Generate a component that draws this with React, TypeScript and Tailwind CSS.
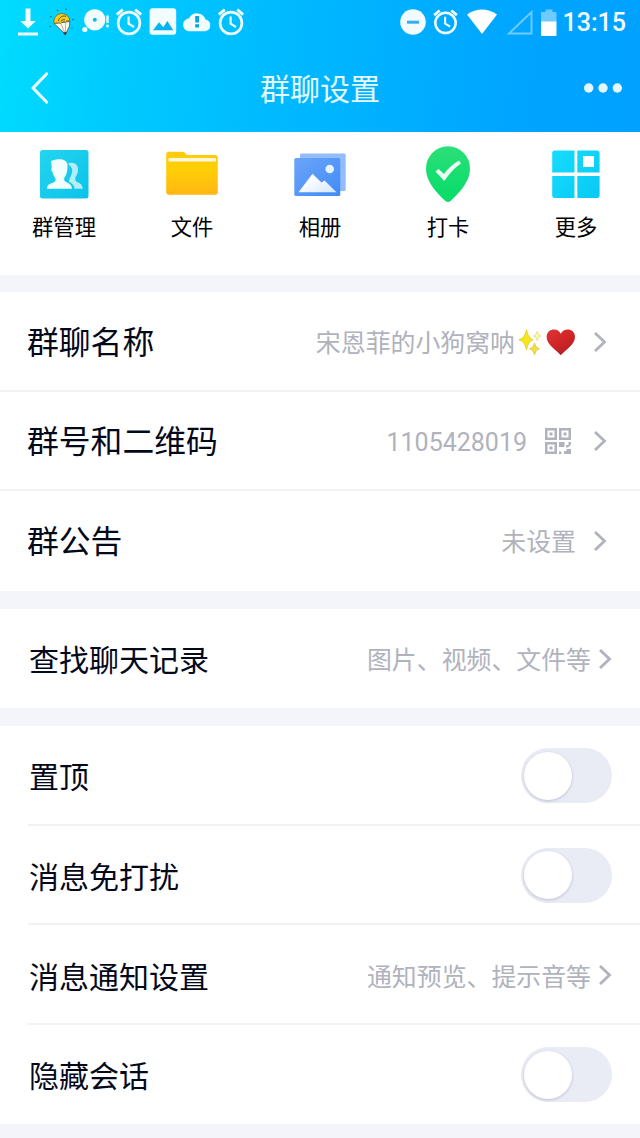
import type { ReactNode } from "react";

function Alarm({ className }: { className: string }) {
  return (
    <svg viewBox="0 0 28 30" className={className} fill="none" stroke="#eefcff">
      <circle cx="14" cy="16" r="10.900" strokeWidth="2.700" />
      <path d="M13.600 9.500v7.200l5.400 3.300" strokeWidth="2.200" />
      <path d="M1.800 7.600 7.800 2.600M26.200 7.600 20.200 2.600" strokeWidth="2.900" />
    </svg>
  );
}

function StatusBar() {
  return (
    <div className="flex h-11 items-center justify-between pl-[14px] pr-[14px]">
      <div className="flex items-center gap-[5.8px]">
        <svg viewBox="0 0 28 30" className="h-[30px] w-7" fill="#f2fdff">
          <path d="M11.500 1.500h5v12.500h5.300L14 21.500 6.200 14h5.300zM4 25.500h20v3H4z" />
        </svg>
        <svg viewBox="0 0 28 30" className="h-[30px] w-7" fill="none">
          <path d="M6 16.500 21.800 14.500 21.500 19 17.500 27.300z" fill="#fff9ea" stroke="#555" strokeWidth=".8" />
          <path d="M6.300 17A8 8 0 1 1 21.900 14.500c-1.800-1.400-3.200-.9-4.500.7-2-.9-3.500-.3-4.500 1.200-2.400-.9-4.700-.9-6.600.6z" fill="#f8cb1f" stroke="#6b5a20" strokeWidth=".7" />
          <path d="M12.900 16.500 17 26.500M17.400 15.500l.2 11" stroke="#8b867a" strokeWidth=".6" />
          <path d="M10.500 14c.5-4 5-6 7.500-4.500M13 14.500c.5-1.500 2.500-2.500 4-1.500" stroke="#544820" strokeWidth=".9" />
          <path d="m14.800 25.500 4-.5-1.500 3.500z" fill="#333" />
          <g fill="#176077"><circle cx="9.500" cy="3.500" r=".8" /><circle cx="18" cy="2.200" r=".8" /><circle cx="3" cy="9.500" r=".8" /><circle cx="25" cy="12.500" r=".8" /><circle cx="2" cy="19.500" r=".8" /><circle cx="24" cy="21" r=".6" /></g>
        </svg>
        <svg viewBox="0 0 28 30" className="h-[30px] w-7" fill="#f2fdff">
          <circle cx="12.800" cy="12.800" r="10.600" />
          <circle cx="12.800" cy="12.800" r="2" fill="#08bce8" />
          <circle cx="2.800" cy="22.500" r="2.600" />
          <path d="M24.300 8.500h2.400v7.500h-2.400zM24.300 17.800h2.400v2.500h-2.400z" />
        </svg>
        <Alarm className="h-[30px] w-7" />
        <svg viewBox="0 0 28 30" className="h-[30px] w-7">
          <rect x=".6" y="1.200" width="26.600" height="26.600" rx="3" fill="#f2fdff" />
          <path d="m4 23.300 6-8 4.300 5 4-6.300 6 9.300z" fill="#05b4ee" />
        </svg>
        <svg viewBox="0 0 28 30" className="h-[30px] w-7">
          <path d="M7 24.300a6.500 6.500 0 0 1-.8-13A8.800 8.800 0 0 1 22.500 12.500a6 6 0 0 1-.5 11.800z" fill="#f2fdff" />
          <path d="M12.200 9h3.800v6.500h-3.800zM12.200 17.300h3.800v3.200h-3.800z" fill="#08a5de" />
        </svg>
        <Alarm className="h-[30px] w-7" />
      </div>
      <div className="flex items-center">
        <svg viewBox="0 0 26 26" className="mr-[6px] size-[26px]">
          <circle cx="13" cy="13" r="12.800" fill="#f2fbff" />
          <path d="M7 13.200h12" stroke="#36aef1" strokeWidth="3" />
        </svg>
        <Alarm className="mr-[7px] h-7 w-[27px]" />
        <svg viewBox="0 0 32 26" className="mr-[8px] h-[26px] w-8">
          <path d="M1 5.500Q16-4.500 31 5.500L16 25z" fill="#fff" />
        </svg>
        <svg viewBox="0 0 28 26" className="mr-[7px] h-[26px] w-7" fill="none">
          <path d="M3 24.500 25.500 3v21.500z" stroke="#6fcbff" strokeWidth="1.900" />
        </svg>
        <svg viewBox="0 0 16 27" className="mr-[6px] h-[27px] w-4">
          <path d="M0 4a1 1 0 0 1 1-1h3.500V.5h7V3h3a1 1 0 0 1 1 1v9H0z" fill="#6fcaff" />
          <path d="M0 12.500h15.500V26a1 1 0 0 1-1 1H1a1 1 0 0 1-1-1z" fill="#fff" />
        </svg>
        <span className="pt-[2px] font-['Roboto',sans-serif] text-[25px] leading-[30px] font-medium text-[#f4fcff]">13:15</span>
      </div>
    </div>
  );
}

function Shortcut({ label, children }: { label: string; children: ReactNode }) {
  return (
    <div className="flex flex-1 flex-col items-center pt-[12px]">
      <svg viewBox="0 0 60 60" className="size-[60px]">{children}</svg>
      <span className="mt-[7px] text-[21.300px] leading-[30px] text-black">{label}</span>
    </div>
  );
}

function Shortcuts() {
  return (
    <div className="flex h-[143px] bg-white">
      <Shortcut label="群管理">
        <defs>
          <linearGradient id="g1" x1="0" y1="0" x2="1" y2="1"><stop stopColor="#23d5ee" /><stop offset="1" stopColor="#0bc2e9" /></linearGradient>
        </defs>
        <rect x="6" y="6" width="48.500" height="48.500" rx="2.500" fill="url(#g1)" />
        <path d="M34 19.500c7-2.500 11 2 9.800 8-.5 4-2.600 5-2.600 7.500 0 4.500 7.500 2.500 7.500 9.700H40.500c0-3.500-1.800-5-5.500-7 0-3.500 3.200-6.200 3.200-11.200 0-3.500-2.200-4-4.200-7z" fill="#b2eefa" />
        <path d="M13 44.700c0-7.200 8.700-4.200 8.700-9.200 0-2-2.700-3.500-3.200-7.500-1.300-.8-1.200-3-.9-4.200.2-2.300-.4-4.300-.6-6.800 7-3 16.500-2.500 16.500 4.500 0 6-1 9.500-3.200 12.500-1.500 5.500 7.700 3.500 7.700 10.700z" fill="#f1fdff" />
      </Shortcut>
      <Shortcut label="文件">
        <defs>
          <linearGradient id="g2" x1="0" y1="0" x2="0" y2="1"><stop stopColor="#fccb0a" /><stop offset=".4" stopColor="#ffcf06" /><stop offset="1" stopColor="#ffb613" /></linearGradient>
        </defs>
        <path d="M4.200 10.500A2.800 2.800 0 0 1 7 7.700h13.500c3 0 2.500 3.300 6 3.300h26.500a2.800 2.800 0 0 1 2.800 2.800V48a2.800 2.800 0 0 1-2.800 2.800H7A2.800 2.800 0 0 1 4.200 48z" fill="url(#g2)" />
        <path d="M6.500 14h47.500v3.600H6.500z" fill="#fff7dc" />
      </Shortcut>
      <Shortcut label="相册">
        <defs>
          <linearGradient id="g3" x1="0" y1="0" x2="1" y2="1"><stop stopColor="#6ba4fa" /><stop offset="1" stopColor="#418cf5" /></linearGradient>
          <linearGradient id="g3w" x1="0" y1="0" x2="1" y2="1"><stop offset=".3" stopColor="#fff" /><stop offset="1" stopColor="#d4e6ff" /></linearGradient>
        </defs>
        <rect x="10" y="9.500" width="45.700" height="37.500" rx="1.500" fill="#93bcfb" />
        <rect x="4.300" y="14" width="46" height="38" rx="1.500" fill="url(#g3)" />
        <path d="M8.500 48.200 22.500 29.700 31.500 38.500 34.500 36.500 46.500 48.200z" fill="url(#g3w)" />
        <circle cx="39.700" cy="25" r="4.300" fill="#e7f3ff" />
      </Shortcut>
      <Shortcut label="打卡">
        <defs>
          <linearGradient id="g4" x1="0" y1="0" x2="0" y2="1"><stop stopColor="#2bdf78" /><stop offset="1" stopColor="#05dc68" /></linearGradient>
        </defs>
        <path d="M30 2.300A22 22 0 0 0 8 25C8 39 22 52 27.500 57q2.500 2.200 5 0C38 52 52 39 52 25A22 22 0 0 0 30 2.300z" fill="url(#g4)" />
        <path d="m17.500 27.500 3-2.500 5.500 5Q32 21.500 41 16.500l2 3Q34.500 25 26.200 37z" fill="#eafff3" />
      </Shortcut>
      <Shortcut label="更多">
        <defs>
          <linearGradient id="g5" gradientUnits="userSpaceOnUse" x1="6" y1="6" x2="54" y2="54"><stop stopColor="#16dcff" /><stop offset="1" stopColor="#08c9f3" /></linearGradient>
        </defs>
        <g fill="url(#g5)">
          <path d="M9 6.500h19.500v22H6.200v-19A2.800 2.800 0 0 1 9 6.500z" />
          <path d="M31.300 6.500h19.500a2.800 2.800 0 0 1 2.800 2.800v19.200H31.300z" />
          <path d="M6.200 32h22.300v22H9a2.800 2.800 0 0 1-2.800-2.800z" />
          <path d="M31.300 32h22.300v19.200a2.800 2.800 0 0 1-2.800 2.800H31.300z" />
        </g>
        <path d="M37 12h11v11H37z" fill="#fff" />
      </Shortcut>
    </div>
  );
}

function Chevron() {
  return (
    <svg viewBox="0 0 14 22" className="mt-[1px] h-[22px] w-[14px]" fill="none">
      <path d="M2 2 11.500 11 2 20" stroke="#b0b2bd" strokeWidth="2.800" />
    </svg>
  );
}

function Row({ label, line, children }: { label: string; line?: boolean; children: ReactNode }) {
  return (
    <div className={"flex h-[99.600px] items-center justify-between bg-white pl-[27px] pr-[33px]" + (line ? " border-b-2 border-[#f2f2f4] pt-[1px]" : "")}>
      <span className="mb-[3px] text-[31.800px] leading-10">{label}</span>
      <div className="flex items-center text-[24.900px] leading-8 text-[#b0b2bd]">{children}</div>
    </div>
  );
}

function InsetRow({ label, line, children }: { label: string; line?: boolean; children: ReactNode }) {
  return (
    <div className="bg-white pl-[28px]">
      <div className={"flex items-center justify-between pl-[1px] pr-[28px]" + (line ? " h-[99.600px] border-b-2 border-[#f2f2f4] pt-[1px]" : " h-[98.800px]")}>
        <span className="text-[30px] leading-10">{label}</span>
        <div className="flex items-center text-[24.900px] leading-8 text-[#b0b2bd]">{children}</div>
      </div>
    </div>
  );
}

function Toggle() {
  return (
    <button type="button" role="switch" aria-checked="false" className="mt-[1px] flex h-[55px] w-[91px] items-center rounded-full bg-[#e9ebf5] pl-[3px]">
      <span className="size-12 rounded-full bg-white shadow-[0_1px_3px_rgba(80,85,120,0.28)]" />
    </button>
  );
}

function QrIcon() {
  return (
    <svg viewBox="0 0 26 26" className="mr-[22px] ml-[18px] size-[26px]" fill="#b0b2bd">
      <path fillRule="evenodd" d="M0 0h12v12H0zM2.500 2.500v7h7v-7zM14 0h12v12H14zM16.500 2.500v7h7v-7zM0 14h12v12H0zM2.500 16.500v7h7v-7z" />
      <path d="M4.500 4.500h3v3h-3zM18.500 4.500h3v3h-3zM4.500 18.500h3v3h-3zM14 14h5.500v5H14zM23.500 14H26v2.500l-3 3h-2V17h2.500zM14 23.500h2.500V26H14zM19 23h2.500v-2H26v5h-7z" />
    </svg>
  );
}

function Emojis() {
  return (
    <svg viewBox="0 0 60 30" className="mr-[18px] h-[30px] w-[60px]">
      <path d="M11.500 3.500q1.300 8.200 6.500 10.300-5.200 1.700-6.500 10.200Q10.200 15.500 4 13.800 10.200 11.700 11.500 3.500z" fill="#f6e71c" stroke="#dfc62e" strokeWidth=".8" />
      <path d="M19.500 17q.8 4.800 4.800 5.800-4 1.200-4.800 6-.8-4.800-4.800-6 4-1 4.800-5.800z" fill="#f3df38" stroke="#d9bf45" strokeWidth=".8" />
      <path d="M22.200 5.500q.6 3.600 3.800 4.500-3.200.7-3.800 4.500-.6-3.800-3.800-4.500 3.200-.9 3.800-4.500z" fill="#fff7b4" stroke="#dcc75a" strokeWidth=".6" />
      <defs>
        <linearGradient id="heart" x1="0" y1="0" x2=".7" y2="1"><stop stopColor="#dd3434" /><stop offset=".6" stopColor="#cf2426" /><stop offset="1" stopColor="#ab2024" /></linearGradient>
      </defs>
      <path d="M45.800 29.300C42 24.500 31.600 19 31.600 10.800 31.600 2.300 43 1 45.800 7.800 48.600 1 60 2.300 60 10.800 60 19 49.600 24.500 45.800 29.300z" fill="url(#heart)" />
    </svg>
  );
}

export default function App() {
  return (
    <div className="flex h-[1138px] w-[640px] flex-col overflow-hidden bg-[#f4f5fa] font-['Noto_Sans_CJK_SC',sans-serif] text-[#03081a]">
      <header className="h-[132px] shrink-0 bg-[linear-gradient(97deg,#00dcff_0%,#00cbff_18%,#00b7ff_48%,#00a5ff_80%,#00a1ff_100%)]">
        <StatusBar />
        <div className="flex h-[88px] items-center justify-between pl-[30px] pr-[18px]">
          <svg viewBox="0 0 20 34" className="h-[34px] w-[26px]" preserveAspectRatio="xMinYMid" fill="none">
            <path d="M16.500 3 3 17l13.500 14" stroke="#eaffff" strokeWidth="3.200" strokeLinecap="round" strokeLinejoin="round" />
          </svg>
          <h1 className="mb-[2px] text-[30px] leading-10 text-[#e4faff]">群聊设置</h1>
          <svg viewBox="0 0 38 10" className="h-[10px] w-[38px]" fill="#e4f7ff">
            <circle cx="4.700" cy="5" r="4.700" /><circle cx="19" cy="5" r="4.700" /><circle cx="33.300" cy="5" r="4.700" />
          </svg>
        </div>
      </header>
      <Shortcuts />
      <div className="mt-[17px]">
        <Row label="群聊名称" line>
          <span>宋恩菲的小狗窝呐</span>
          <Emojis />
          <Chevron />
        </Row>
        <Row label="群号和二维码" line>
          <span className="pt-[5px] font-['Roboto',sans-serif] text-[25px]">1105428019</span>
          <QrIcon />
          <Chevron />
        </Row>
        <Row label="群公告">
          <span className="mr-[17px] mb-[1px]">未设置</span>
          <Chevron />
        </Row>
      </div>
      <div className="mt-[18px]">
        <InsetRow label="查找聊天记录">
          <span className="mr-[7px]">图片、视频、文件等</span>
          <Chevron />
        </InsetRow>
      </div>
      <div className="mt-[18.500px]">
        <InsetRow label="置顶" line><Toggle /></InsetRow>
        <InsetRow label="消息免打扰" line><Toggle /></InsetRow>
        <InsetRow label="消息通知设置" line>
          <span className="mr-[7px]">通知预览、提示音等</span>
          <Chevron />
        </InsetRow>
        <InsetRow label="隐藏会话"><Toggle /></InsetRow>
      </div>
    </div>
  );
}
